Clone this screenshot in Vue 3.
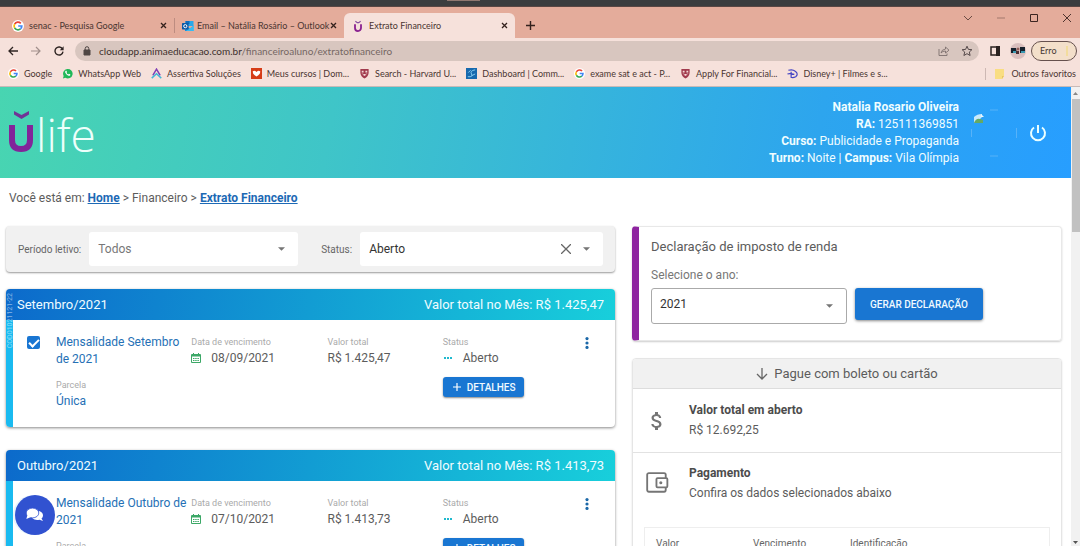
<script setup>
import { ref } from 'vue'

const term = ref('Todos')
const status = ref('Aberto')
const year = ref('2021')
const url = ref('cloudapp.animaeducacao.com.br')

const tabs = [
  { icon: 'google', label: 'senac - Pesquisa Google', kind: 'first' },
  { icon: 'outlook', label: 'Email – Natália Rosário – Outlook', kind: 'second' },
  { icon: 'ulife', label: 'Extrato Financeiro', kind: 'active' }
]
const bookmarks = [
  { icon: 'google', label: 'Google' },
  { icon: 'whatsapp', label: 'WhatsApp Web' },
  { icon: 'assertiva', label: 'Assertiva Soluções' },
  { icon: 'cursos', label: 'Meus cursos | Dom...' },
  { icon: 'shield', label: 'Search - Harvard U...' },
  { icon: 'dashboard', label: 'Dashboard | Comm...' },
  { icon: 'google', label: 'exame sat e act - P...' },
  { icon: 'shield', label: 'Apply For Financial...' },
  { icon: 'disney', label: 'Disney+ | Filmes e s...' }
]
const months = ref([
  { id: 'set', name: 'Setembro/2021', total: 'R$ 1.425,47', title: 'Mensalidade Setembro de 2021', due: '08/09/2021', code: 'COD01021121-22', checked: true },
  { id: 'out', name: 'Outubro/2021', total: 'R$ 1.413,73', title: 'Mensalidade Outubro de 2021', due: '07/10/2021', code: '', checked: true }
])
</script>

<template>
  <div class="screen">
    <svg class="defs" width="0" height="0" aria-hidden="true">
      <symbol id="google" viewBox="0 0 12 12">
        <circle cx="6" cy="6" r="6" fill="#fff" />
        <g fill="none" stroke-width="1.7">
          <path d="M8.8 3.3A3.9 3.9 0 0 0 2.6 4.1" stroke="#ea4335" />
          <path d="M2.6 4.1A3.9 3.9 0 0 0 2.6 7.9" stroke="#fbbc05" />
          <path d="M2.6 7.9A3.9 3.9 0 0 0 8.5 8.9" stroke="#34a853" />
          <path d="M8.5 8.9A3.8 3.8 0 0 0 9.8 6H6.2" stroke="#4285f4" />
        </g>
      </symbol>
      <symbol id="outlook" viewBox="0 0 12 12">
        <path d="M3.5 1h8v5h-8z" fill="#28a8ea" />
        <path d="M3.5 1h4v3h-4z" fill="#0f6cbd" />
        <path d="M3 5.5l4.8 3 4-3V11H3z" fill="#1490df" />
        <path d="M12 5.5V11H4z" fill="#50d9ff" opacity=".6" />
        <rect x="0" y="3" width="6.6" height="6.4" rx=".6" fill="#0a5aa8" />
        <circle cx="3.3" cy="6.2" r="1.6" fill="none" stroke="#fff" />
      </symbol>
      <symbol id="ulife" viewBox="0 0 12 16">
        <path d="M2 5.5v5.3a4 4 0 0 0 8 0V5.5" fill="none" stroke="#8a2190" stroke-width="2.4" />
        <path d="M2.5 1L6 3.2 9.5 1v1.5L6 4.6 2.5 2.500z" fill="#6a2b91" />
      </symbol>
      <symbol id="whatsapp" viewBox="0 0 12 12">
        <path d="M1 11.500l.8-2.800A5.200 5.200 0 1 1 3.700 10.700z" fill="#20b858" />
        <path d="M4 3c-1 1-.6 2.400 1 4s3.200 2 4 1l.1-.8-1.500-.8-.8.800C5.900 6.900 5.200 6.200 4.900 5.300l.6-.7L4.900 3z" fill="#fff" />
      </symbol>
      <symbol id="assertiva" viewBox="0 0 12 12">
        <path d="M2 8L6 1.200 10 8" fill="none" stroke="#8140b4" stroke-width="1.600" />
        <path d="M.8 11L6 6.300 11.200 11" fill="none" stroke="#42b7d7" stroke-width="1.600" />
      </symbol>
      <symbol id="cursos" viewBox="0 0 12 12">
        <path d="M0 0h12v12H0z" fill="#d63c17" />
        <path d="M2 3.500Q4 2 6 4.300 8 2 10 3.500q.5 3-2 4.500L6 9.300 4 8Q1.500 6.500 2 3.500z" fill="#fff" />
      </symbol>
      <symbol id="shield" viewBox="0 0 12 12">
        <path d="M1.500 1h9v4.500Q10 9.500 6 11.500 2 9.500 1.500 5.500z" fill="#a13a4d" />
        <path d="M3 3h2v1.800H3zM7 3h2v1.800H7zM5 6.500h2v2H5z" fill="#f3d9d7" />
        <path d="M3 6l3 1.500L9 6" fill="none" stroke="#f3d9d7" stroke-width=".6" />
      </symbol>
      <symbol id="dashboard" viewBox="0 0 12 12">
        <path d="M0 0h12v12H0z" fill="#1769ae" />
        <path d="M2 9.500Q8 10 6 6.500T10 2M2.500 5l2.500-2.500M6 8.500l4-2" fill="none" stroke="#8fd3f5" />
      </symbol>
      <symbol id="disney" viewBox="0 0 12 12">
        <path d="M1.500 2.500Q6 1 9 3.500q4 3 .5 6-3 1.500-5.500.500M4.500 4v6M.5 6.500Q3 5.500 8 7" fill="none" stroke="#4545c4" stroke-width="1.300" />
      </symbol>
      <symbol id="caret" viewBox="0 0 8 4"><path d="M0 0h8L4 4z" fill="#757575" /></symbol>
    </svg>

    <header class="browser">
      <div class="desktop-edge"><span></span></div>
      <div class="tabs">
        <div v-for="t in tabs" :key="t.label" class="tab" :class="t.kind">
          <svg class="fav"><use :href="'#' + t.icon" /></svg>
          <span class="tab-label">{{ t.label }}</span>
          <button class="plain" aria-label="Fechar guia">
            <svg width="7" height="7" viewBox="0 0 7 7"><path d="M1 1l5 5M6 1L1 6" stroke="#33211d" stroke-width="1.300" /></svg>
          </button>
        </div>
        <button class="plain new-tab" aria-label="Nova guia">
          <svg width="9" height="9" viewBox="0 0 9 9"><path d="M4.500 0v9M0 4.500h9" stroke="#33211d" stroke-width="1.400" /></svg>
        </button>
        <div class="window-buttons">
          <button class="plain" aria-label="Pesquisar guias"><svg width="8" height="8" viewBox="0 0 8 8"><path d="M0 2l4 4 4-4" fill="none" stroke="#6b4d45" /></svg></button>
          <button class="plain" aria-label="Minimizar"><svg width="8" height="8" viewBox="0 0 8 8"><path d="M0 4h8" stroke="#a2786d" /></svg></button>
          <button class="plain" aria-label="Maximizar"><svg width="8" height="8" viewBox="0 0 8 8"><path d="M.5.5h7v7h-7z" fill="none" stroke="#3b2521" /></svg></button>
          <button class="plain" aria-label="Fechar"><svg width="8" height="8" viewBox="0 0 8 8"><path d="M0 0l8 8M8 0L0 8" stroke="#4d332d" /></svg></button>
        </div>
      </div>
      <div class="toolbar">
        <button class="plain" aria-label="Voltar"><svg width="10" height="10" viewBox="0 0 10 10"><path d="M10 5H1M5 1L1 5l4 4" fill="none" stroke="#2f2523" stroke-width="1.300" /></svg></button>
        <button class="plain" aria-label="Avançar"><svg width="10" height="10" viewBox="0 0 10 10"><path d="M0 5h9M5 1l4 4-4 4" fill="none" stroke="#a18f8b" stroke-width="1.200" /></svg></button>
        <button class="plain" aria-label="Recarregar"><svg width="10" height="10" viewBox="0 0 10 10"><path d="M8.500 3A4 4 0 1 0 9 5.600" fill="none" stroke="#2f2523" stroke-width="1.400" /><path d="M9.600.3v4H5.800z" fill="#2f2523" /></svg></button>
        <div class="address">
          <svg width="8" height="10" viewBox="0 0 8 10"><path d="M1 4h6v5H1z" fill="#4e4644" stroke="#4e4644" /><path d="M2.200 4V2.500a1.800 1.800 0 0 1 3.600 0V4" fill="none" stroke="#4e4644" /></svg>
          <p><b>{{ url }}</b>/financeiroaluno/extratofinanceiro</p>
          <button class="plain" aria-label="Compartilhar"><svg width="12" height="10" viewBox="0 0 12 10"><path d="M1 3v6.500h8V7.500M3 7q.500-3.500 4.500-4V1L11 4.200 7.500 7V5Q4.500 5 3 7z" fill="none" stroke="#7e716e" stroke-width=".9" /></svg></button>
          <button class="plain" aria-label="Favoritar"><svg width="12" height="12" viewBox="0 0 12 12"><path d="M6 1.200l1.400 3.200 3.500.300-2.600 2.300.800 3.500L6 8.700l-3.100 1.800.8-3.500L1.100 4.700l3.500-.3z" fill="none" stroke="#55494a" /></svg></button>
        </div>
        <button class="plain panel" aria-label="Painel lateral"><svg width="10" height="10" viewBox="0 0 10 10"><path d="M1 1h8v8H1z" fill="none" stroke="#2b2220" stroke-width="1.500" /><path d="M6 0h4v10H6z" fill="#2b2220" /></svg></button>
        <svg width="16" height="16" viewBox="0 0 16 16"><circle cx="8" cy="8" r="8" fill="#d9bebd" /><path d="M1 5h5l1 5H1zM10 4h5v6h-5z" fill="#16202c" /><path d="M3 8h3v2H3zM11 8h4v2h-4z" fill="#3999b2" /><circle cx="8" cy="6" r="1.500" fill="#915e59" /><path d="M6 11V8h3v3z" fill="#4b2e34" /></svg>
        <button class="error">Erro<i></i></button>
      </div>
      <nav class="bookmarks">
        <a v-for="(b, i) in bookmarks" :key="i" href="#"><svg class="fav small"><use :href="'#' + b.icon" /></svg>{{ b.label }}</a>
        <a href="#" class="others"><svg width="9" height="11" viewBox="0 0 9 11"><path d="M0 1h9v7L7 11H0z" fill="#f9dd82" /><path d="M7 11V8h2" fill="#e8c563" /></svg>Outros favoritos</a>
      </nav>
    </header>

    <div class="viewport">
      <div class="page">
        <header class="hero">
          <svg class="logo" width="90" height="44" viewBox="0 0 90 44" role="img" aria-label="ŭ">
            <path d="M3 14v15q0 9 9 9t9-9V14" fill="none" stroke="#82259a" stroke-width="6" stroke-linejoin="round" />
            <path d="M5 0l7.500 4L20 0v3.500L12.500 8 5 3.500z" fill="#713396" />
            <g class="life"><text x="27" y="41">life</text></g>
          </svg>
          <div class="student">
            <p><b>Natalia Rosario Oliveira</b></p>
            <p><b>RA:</b> 125111369851</p>
            <p><b>Curso:</b> Publicidade e Propaganda</p>
            <p><b>Turno:</b> Noite | <b>Campus:</b> Vila Olímpia</p>
          </div>
          <svg class="avatar" width="46" height="48" viewBox="0 0 46 48" aria-hidden="true">
            <path d="M19 1h8M19 47h8M.5 20v8M45.500 19v10" stroke="#77bff8" opacity=".6" />
            <path d="M3 14V8Q6 5 11 5v3L6 13z" fill="#c9e9fb" /><path d="M3 14q2-5 6-4l3 1v3z" fill="#65a963" /><path d="M10 5l3 3h-3z" fill="#e9f6ff" />
          </svg>
          <button class="plain" aria-label="Sair"><svg width="18" height="18" viewBox="0 0 18 18"><path d="M9 1v8M5 3.500a7 7 0 1 0 8 0" fill="none" stroke="#eaffff" stroke-width="2" /></svg></button>
        </header>

        <p class="crumbs">Você está em: <a href="#">Home</a> &gt; Financeiro &gt; <a href="#">Extrato Financeiro</a></p>

        <div class="columns">
          <main>
            <form class="filters">
              <label for="term">Período letivo:</label>
              <div class="select term">
                <select id="term" v-model="term"><option>Todos</option></select>
                <svg class="caret"><use href="#caret" /></svg>
              </div>
              <label for="status">Status:</label>
              <div class="select status">
                <select id="status" v-model="status"><option>Aberto</option></select>
                <button type="button" class="plain clear" aria-label="Limpar"><svg width="10" height="10" viewBox="0 0 10 10"><path d="M0 0l10 10M10 0L0 10" stroke="#666" stroke-width="1.300" /></svg></button>
                <svg class="caret"><use href="#caret" /></svg>
              </div>
            </form>

            <section v-for="m in months" :key="m.id" class="month">
              <h2><span>{{ m.name }}</span><span>Valor total no Mês: {{ m.total }}</span></h2>
              <span v-if="m.code" class="code">{{ m.code }}</span>
              <div class="entry">
                <input type="checkbox" v-model="m.checked" :aria-label="m.title" />
                <div>
                  <p class="title">{{ m.title }}</p>
                  <small class="parcel">Parcela</small>
                  <p class="title">Única</p>
                </div>
                <div>
                  <small>Data de vencimento</small>
                  <p class="value"><svg width="10" height="10" viewBox="0 0 10 10"><path d="M.5 1.500h9v8h-9z" fill="none" stroke="#3ca867" /><path d="M1 2h8v1.500H1zM2 0h1v2H2zM7 0h1v2H7z" fill="#3ca867" /><path d="M2 5.500h6M2 7.500h6" stroke="#3ca867" stroke-dasharray="1.500 .7" /></svg>{{ m.due }}</p>
                </div>
                <div>
                  <small>Valor total</small>
                  <p class="value">{{ m.total }}</p>
                </div>
                <div>
                  <small>Status</small>
                  <p class="value"><svg width="10" height="4" viewBox="0 0 10 4"><path d="M1 1h2v2H1zM4 1h2v2H4zM7 1h2v2H7z" fill="#20b9ce" /></svg>Aberto</p>
                  <button class="details"><svg width="8" height="8" viewBox="0 0 8 8"><path d="M4 0v8M0 4h8" stroke="#fff" stroke-width="1.200" /></svg>DETALHES</button>
                </div>
                <button class="plain more" aria-label="Mais opções"><svg width="4" height="12" viewBox="0 0 4 12" fill="#1c68a8"><circle cx="2" cy="1.600" r="1.600" /><circle cx="2" cy="6" r="1.600" /><circle cx="2" cy="10.400" r="1.600" /></svg></button>
              </div>
            </section>
          </main>

          <aside>
            <section class="tax">
              <h3>Declaração de imposto de renda</h3>
              <label for="year">Selecione o ano:</label>
              <div class="tax-row">
                <div class="select outlined">
                  <select id="year" v-model="year"><option>2021</option></select>
                  <svg class="caret"><use href="#caret" /></svg>
                </div>
                <button class="generate">GERAR DECLARAÇÃO</button>
              </div>
            </section>

            <section class="pay">
              <h3><svg width="12" height="12" viewBox="0 0 12 12"><path d="M6 0v11M1 6l5 5 5-5" fill="none" stroke="#666" stroke-width="1.300" /></svg>Pague com boleto ou cartão</h3>
              <div class="pay-row">
                <svg width="24" height="26" viewBox="0 0 24 24"><path fill="#757575" d="M11.800 10.900c-2.270-.59-3-1.200-3-2.150 0-1.090 1.010-1.850 2.700-1.850 1.780 0 2.440.85 2.500 2.100h2.210c-.07-1.720-1.120-3.300-3.210-3.810V3h-3v2.160c-1.940.42-3.500 1.680-3.500 3.610 0 2.310 1.910 3.460 4.700 4.130 2.500.6 3 1.480 3 2.410 0 .69-.49 1.790-2.700 1.790-2.060 0-2.870-.92-2.980-2.100h-2.200c.12 2.190 1.760 3.420 3.680 3.830V21h3v-2.150c1.950-.37 3.500-1.500 3.500-3.550 0-2.840-2.430-3.810-4.700-4.400z" /></svg>
                <div><b>Valor total em aberto</b><p>R$ 12.692,25</p></div>
              </div>
              <div class="pay-row payment">
                <svg width="24" height="24" viewBox="0 0 22 22"><rect x="2" y="2" width="17" height="17" rx="1.500" fill="none" stroke="#757575" stroke-width="1.700" /><rect x="10.500" y="6.500" width="10" height="8.500" rx="1" fill="#fff" stroke="#757575" stroke-width="1.700" /><circle cx="14.500" cy="10.700" r="1.400" fill="#757575" /></svg>
                <div><b>Pagamento</b><p>Confira os dados selecionados abaixo</p></div>
              </div>
              <table>
                <thead><tr><th>Valor</th><th>Vencimento</th><th>Identificação</th></tr></thead>
              </table>
            </section>
          </aside>
        </div>
      </div>
      <div class="scrollbar" aria-hidden="true">
        <svg width="9" height="12" viewBox="0 0 9 12"><path d="M2 8l2.500-3L7 8z" fill="#888" /></svg>
        <span></span>
        <svg width="9" height="6" viewBox="0 0 9 6"><path d="M2 1l2.500 3L7 1z" fill="#555" /></svg>
      </div>
    </div>
    <button class="chat" aria-label="Abrir chat">
      <svg width="18" height="16" viewBox="0 0 18 16"><path d="M8 8.500q4-.5 5-4.500 4 1 4 4.500 0 2-1.500 3l1.500 2.500-3.500-1.300Q9 13.500 6.500 11.500z" fill="#fff" /><ellipse cx="6.500" cy="6" rx="6.300" ry="4.900" fill="#fff" stroke="#3152d0" stroke-width=".8" /><path d="M1.500 8L.3 12 5 10z" fill="#fff" /></svg>
    </button>
  </div>
</template>

<style>
html, body { margin: 0; overflow: hidden; }
</style>

<style scoped>
* { box-sizing: border-box; }
.screen { height: 100vh; display: flex; flex-direction: column; overflow: hidden; position: relative; background: #fff; color: #5c5c5c; font: 12px/17px Roboto, sans-serif; }
.defs { position: absolute; }
p, h2, h3 { margin: 0; font-weight: 400; }
svg { flex: none; display: block; }
button { font-family: inherit; cursor: pointer; }
.plain { border: 0; padding: 0; background: none; display: flex; flex: none; }

.browser { flex: none; background: #f6e1db; color: #4a3531; font: 9px/14px Lato, "Open Sans", sans-serif; border-bottom: 1px solid #c8bab7; }
.desktop-edge { height: 7px; background: #3b3d3f; border-bottom: 1px solid #594744; }
.desktop-edge span { display: block; width: 33px; height: 1px; margin-left: 447px; background: #8f7770; }
.tabs { height: 31px; background: #e4ac9b; display: flex; align-items: flex-end; }
.tab { height: 25px; display: flex; align-items: center; padding: 0 7px 0 12px; }
.tab.first { width: 174px; }
.tab.second { width: 170px; padding-left: 8px; position: relative; }
.tab.second::before { content: ""; position: absolute; left: 0; top: 5px; width: 1px; height: 15px; background: #bd8c80; }
.tab.active { width: 171px; background: #f6e1db; border-radius: 6px 6px 0 0; padding-left: 8px; }
.fav { width: 12px; height: 12px; flex: none; }
.fav.small { width: 11px; height: 11px; }
.tab-label { margin-left: 5px; flex: 1; white-space: nowrap; }
.tab.second .tab-label { margin-left: 3px; }
.new-tab { margin: 0 0 8px 11px; }
.window-buttons { display: flex; gap: 25px; margin-left: auto; padding-right: 9px; align-self: flex-start; padding-top: 7px; }
.toolbar { height: 25px; display: flex; align-items: center; gap: 13px; padding: 0 3px 0 8px; }
.address { height: 20px; flex: 1; border-radius: 10px; background: #d8c6bf; display: flex; align-items: center; padding: 0 6px 0 8px; gap: 8px; margin: 0 -2px 0 -2px; color: #756663; font-size: 10px; }
.address p { flex: 1; white-space: nowrap; }
.address b { font-weight: 400; color: #3c302d; }
.address button + button { margin-left: 3px; }
.panel { margin-right: -3px; }
.error { width: 46px; height: 20px; border: 1px solid #66514e; border-radius: 10px; background: #f3dfca; color: #463a36; font-size: 9px; padding: 0 8px; display: flex; align-items: center; justify-content: space-between; margin-left: -8px; }
.error i { width: 2px; height: 10px; background: #f2dc9d; }
.bookmarks { height: 21px; margin-bottom: 2px; display: flex; align-items: center; padding: 0 4px 0 8px; gap: 10px; }
.bookmarks a { display: flex; align-items: center; gap: 5px; color: inherit; text-decoration: none; white-space: nowrap; }
.bookmarks .others { margin-left: auto; border-left: 1px solid #cdb8b3; padding-left: 9px; gap: 7px; height: 12px; }

.viewport { flex: 1; min-height: 0; display: flex; }
.page { flex: 1; min-width: 0; overflow: hidden; }
.hero { height: 91px; display: flex; align-items: center; padding: 0 24px 0 9px; background: linear-gradient(100deg, #48d5b1 0%, #3fc5c8 31%, #2da5ee 76%, #279eff 100%); color: #f0fdff; }
.logo { overflow: visible; }
.life text { font: 300 46px "Open Sans", sans-serif; fill: #edfffb; }
.student { margin-left: auto; text-align: right; }
.avatar { margin: 0 12px; }
.crumbs { padding: 12px 9px 10px; font-size: 12px; }
.crumbs a { color: #1c69b5; font-weight: 700; }
.columns { display: grid; grid-template-columns: 609fr 430fr; gap: 17px; padding: 9px 9px 0 6px; align-items: start; }

.filters { height: 46px; background: #f1f1f1; border-radius: 4px; box-shadow: 0 1px 2px #999; display: flex; align-items: center; padding: 0 12px; font-size: 10px; color: #666; }
.select { position: relative; height: 34px; background: #fff; border-radius: 3px; margin-left: 8px; }
.select select { appearance: none; width: 100%; height: 100%; border: 0; background: transparent; padding: 0 9px; font: 12px Roboto, sans-serif; color: #333; border-radius: 3px; }
.term { flex: 209; margin-right: 23px; }
.term select { color: #777; }
.status { flex: 243; }
.caret { position: absolute; right: 13px; top: 15px; width: 7px; height: 4px; pointer-events: none; }
.clear { position: absolute; right: 32px; top: 12px; }

.month { position: relative; margin: 17px 0 23px; border-radius: 4px; box-shadow: 0 1px 3px #888; background: #fff; overflow: hidden; }
.month h2 { height: 31px; padding: 0 11px; display: flex; align-items: center; justify-content: space-between; background: linear-gradient(100deg, #0c6acb, #18cfdb); color: #f0fcff; font-size: 13px; }
.code { position: absolute; left: 0; top: 4px; writing-mode: vertical-rl; transform: rotate(180deg); color: #fff; opacity: .5; font-size: 7px; line-height: 8px; }
.entry { border-left: 7px solid #19baf0; display: grid; grid-template-columns: 43px 135fr 136fr 115fr 142fr 30px; min-height: 107px; padding-top: 14px; align-items: start; }
.entry input { appearance: none; width: 13px; height: 13px; margin: 2px 0 0 14px; border-radius: 2px; background: #1976d2; position: relative; }
.entry input:checked::after { content: ""; position: absolute; left: 4px; top: 1px; width: 4px; height: 8px; border: solid #fff; border-width: 0 2px 2px 0; transform: rotate(45deg); }
.title { color: #2570b5; }
small { display: block; font-size: 9px; line-height: 17px; color: #aaa; }
.parcel { margin-top: 9px; line-height: 16px; }
.value { display: flex; align-items: center; gap: 10px; line-height: 14px; }
.details { margin-top: 12px; height: 20px; border: 0; border-radius: 3px; padding: 0 9px 0 10px; background: #1976d2; color: #f0faff; box-shadow: 0 1px 2px #888; display: flex; align-items: center; gap: 6px; font-size: 10px; font-weight: 500; }
.more { padding: 3px 0; }

.tax { border: 1px solid #e8e8e8; border-left: 7px solid #8e24a0; border-radius: 4px; box-shadow: 0 1px 2px #ccc; padding: 10px 12px 16px; }
.tax h3 { font-size: 13px; line-height: 20px; }
.tax label { display: block; margin-top: 10px; color: #777; line-height: 17px; }
.tax-row { display: flex; align-items: flex-start; gap: 8px; margin-top: 4px; }
.outlined { width: 196px; height: 36px; margin: 0; border: 1px solid #aaa; }
.outlined select { padding: 0 8px 4px; }
.generate { height: 32px; border: 0; border-radius: 3px; padding: 0 15px; background: #1976d2; color: #f0faff; font-size: 10px; font-weight: 500; box-shadow: 0 1px 3px #888; }
.pay { margin-top: 17px; border: 1px solid #e5e5e5; border-radius: 4px; box-shadow: 0 1px 2px #ddd; overflow: hidden; }
.pay h3 { height: 30px; display: flex; align-items: center; justify-content: center; gap: 6px; background: #f1f1f1; border-bottom: 1px solid #ddd; font-size: 13px; }
.pay-row { height: 64px; display: flex; align-items: center; padding: 0 12px; gap: 20px; border-bottom: 1px solid #e2e2e2; }
.pay-row b { display: block; font-weight: 700; color: #4c4c4c; margin-bottom: 3px; }
.payment { height: 60px; border: 0; }
.pay table { width: calc(100% - 22px); margin: 14px 11px 0; border: 1px solid #eee; border-spacing: 0; table-layout: fixed; }
.pay th { padding: 7px 11px; text-align: left; font-size: 10px; font-weight: 400; color: #666; width: 97px; }
.pay th:last-child { width: auto; }
.scrollbar { width: 9px; flex: none; background: #f1f1f1; display: flex; flex-direction: column; }
.scrollbar span { height: 133px; background: #c1c1c1; margin: 0 0 auto 1px; }
.chat { position: absolute; left: 15px; bottom: 11px; width: 40px; height: 40px; border: 0; border-radius: 50%; background: #3152d0; display: flex; align-items: center; justify-content: center; padding: 0; box-shadow: -2px 0 0 #eaf5fc; }
</style>
